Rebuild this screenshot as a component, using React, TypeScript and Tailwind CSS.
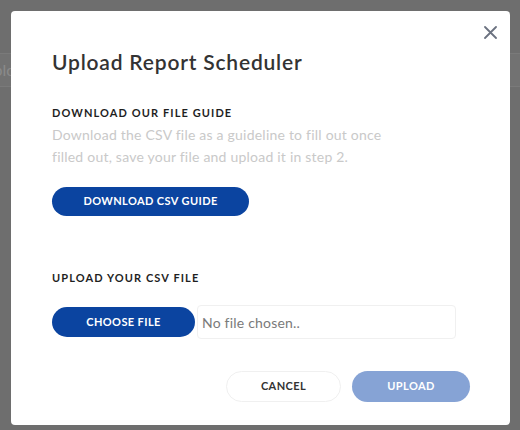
import * as React from "react";

const App = () => {
  return (
    <div className="relative w-[520px] h-[430px] overflow-hidden bg-[#6e6e6e] font-['Lato',sans-serif]">
      {/* page behind the overlay */}
      <div className="pt-[53px]">
        <div className="h-[34px] border-y border-[#7a7a7a] bg-[#727272] flex items-center text-[16px] text-[#8a8a8a]">
          <span className="ml-[-18px]">Upload</span>
        </div>
      </div>

      {/* MODAL */}
      <div className="absolute left-[11px] top-[11px] w-[499px] h-[414px] bg-white rounded-[4px] px-[41px] pt-[38px]">
        <button className="absolute right-[11px] top-[12px] w-[18px] h-[18px] flex items-center justify-center text-[#6b7280]">
          <svg width="13" height="13" viewBox="0 0 13 13" fill="none" stroke="currentColor" strokeWidth="1.8" strokeLinecap="round">
            <path d="M1 1L12 12M12 1L1 12" />
          </svg>
        </button>

        <h2 className="text-[21px] leading-[26px] font-semibold tracking-[0.8px] text-[#333333]">Upload Report Scheduler</h2>

        {/* download section */}
        <h3 className="mt-[31px] text-[11px] leading-[14px] font-bold tracking-[1.1px] text-[#1f1f1f]">DOWNLOAD OUR FILE GUIDE</h3>
        <p className="mt-[4px] text-[14px] leading-[22px] tracking-[0.22px] text-[#c9c9c9]">
          Download the CSV file as a guideline to fill out once<br />
          filled out, save your file and upload it in step 2.
        </p>
        <button className="mt-[19px] w-[197px] h-[29px] rounded-full bg-[#0b44a0] text-white text-[11px] font-bold tracking-[0.4px]">
          DOWNLOAD CSV GUIDE
        </button>

        {/* upload section */}
        <h3 className="mt-[55px] text-[11px] leading-[14px] font-bold tracking-[1.1px] text-[#1f1f1f]">UPLOAD YOUR CSV FILE</h3>
        <div className="mt-[20px] flex items-center gap-[2px]">
          <button className="w-[143px] h-[30px] rounded-full bg-[#0b44a0] text-white text-[11px] font-bold tracking-[0.4px]">
            CHOOSE FILE
          </button>
          <div className="w-[259px] h-[34px] border border-[#f0f0f0] rounded-[4px] flex items-center pl-[4px] text-[14px] tracking-[0.2px] text-[#7a7a7a]">
            No file chosen..
          </div>
        </div>

        {/* footer */}
        <div className="mt-[32px] flex justify-end gap-[11px] mr-[-1px]">
          <button className="w-[115px] h-[31px] rounded-full border border-[#f0f0f0] bg-white text-[#333333] text-[11px] font-bold tracking-[0.4px]">
            CANCEL
          </button>
          <button className="w-[118px] h-[31px] rounded-full bg-[#86a3d5] text-white text-[11px] font-bold tracking-[0.4px]">
            UPLOAD
          </button>
        </div>
      </div>
    </div>
  );
};

export default App;
